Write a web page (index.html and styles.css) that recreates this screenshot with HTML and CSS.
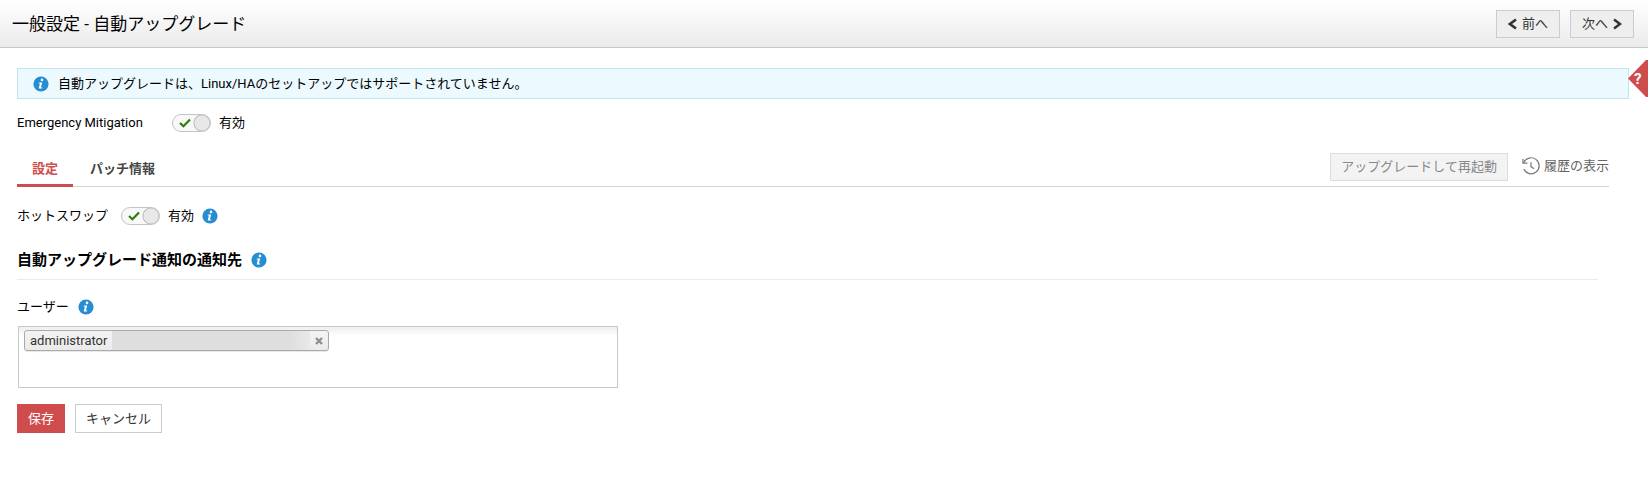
FILE: index.html
```html
<!DOCTYPE html>
<html lang="ja">
  <head>
    <meta charset="UTF-8" />
    <meta name="viewport" content="width=device-width, initial-scale=1.0" />
    <title>一般設定 - 自動アップグレード</title>
    <link rel="stylesheet" href="styles.css">
  </head>

  <body>
    <svg class="defs" aria-hidden="true">
      <symbol id="info" viewBox="0 0 16 16">
        <circle cx="8" cy="8" r="7.6" fill="#268dd2" />
        <circle cx="9" cy="3.9" r="1.3" fill="#fff" />
        <path d="M5.9 6.5h3.3L7.9 11.4h1.4l-.3 1.1H5.7L6.9 7.6H5.6z" fill="#fff" />
      </symbol>
      <symbol id="check" viewBox="0 0 12 10">
        <path d="M1 5l3.4 3.3L11 1.4" fill="none" stroke="#2f7d0b" stroke-width="2.2" />
      </symbol>
    </svg>

    <header class="header">
      <h1>一般設定 - 自動アップグレード</h1>
      <div class="pager">
        <button type="button" class="btn">
          <svg width="9" height="12" viewBox="0 0 9 12"><path d="M8 1.5L2 6l6 4.5" fill="none" stroke="#333" stroke-width="2.6" /></svg>
          前へ
        </button>
        <button type="button" class="btn">
          次へ
          <svg width="9" height="12" viewBox="0 0 9 12"><path d="M1 1.5L7 6l-6 4.5" fill="none" stroke="#333" stroke-width="2.6" /></svg>
        </button>
      </div>
    </header>

    <a href="#" class="help" aria-label="ヘルプ"><span>?</span></a>

    <main class="container">
      <div class="notice">
        <svg class="info"><use href="#info" /></svg>
        <p>自動アップグレードは、Linux/HAのセットアップではサポートされていません。</p>
      </div>

      <div class="row mitigation">
        <label for="mitigation" class="row-label">Emergency Mitigation</label>
        <span class="toggle">
          <input type="checkbox" id="mitigation" checked />
          <svg><use href="#check" /></svg>
        </span>
        <span>有効</span>
      </div>

      <div class="tabbar">
        <nav class="tabs">
          <a href="#settings" class="active">設定</a>
          <a href="#patch">パッチ情報</a>
        </nav>
        <div class="actions">
          <button type="button" class="btn" disabled>アップグレードして再起動</button>
          <a href="#history" class="history">
            <svg width="18" height="18" viewBox="0 0 18 18" fill="none" stroke="#757a7c" stroke-width="1.2">
              <path d="M1.7 5.8A8 8 0 1 1 1.8 12" />
              <path d="M1 1.8v4.4h4.4" />
              <path d="M9 5.2v4.4l3 2.2" />
            </svg>
            履歴の表示
          </a>
        </div>
      </div>

      <div class="row hotswap">
        <label for="hotswap">ホットスワップ</label>
        <span class="toggle">
          <input type="checkbox" id="hotswap" checked />
          <svg><use href="#check" /></svg>
        </span>
        <span>有効</span>
        <svg class="info"><use href="#info" /></svg>
      </div>

      <form class="form">
        <h2>自動アップグレード通知の通知先 <svg class="info"><use href="#info" /></svg></h2>

        <div class="field-label">
          <label for="users">ユーザー</label>
          <svg class="info"><use href="#info" /></svg>
        </div>
        <div class="userbox">
          <span class="chip">
            administrator
            <span class="masked"></span>
            <button type="button" aria-label="削除">
              <svg width="8" height="8" viewBox="0 0 8 8"><path d="M1 1l6 6M7 1L1 7" stroke="#8f8f8f" stroke-width="2.4" /></svg>
            </button>
          </span>
          <input type="text" id="users" />
        </div>

        <div class="buttons">
          <button type="submit" class="btn save">保存</button>
          <button type="button" class="btn cancel">キャンセル</button>
        </div>
      </form>
    </main>
  </body>
</html>
```

FILE: styles.css
```css
* {
  box-sizing: border-box;
}

body {
  margin: 0;
  background: #fff;
  color: #000;
  font-family: Roboto, "Noto Sans CJK JP", sans-serif;
  font-size: 13px;
  line-height: 20px;
}

h1,
h2,
p {
  margin: 0;
}

a {
  text-decoration: none;
}

svg {
  flex: none;
}

button,
input {
  font: inherit;
}

.defs {
  position: absolute;
  width: 0;
  height: 0;
}

.info {
  width: 16px;
  height: 16px;
}

.btn {
  display: flex;
  align-items: center;
  justify-content: center;
  gap: 5px;
  height: 28px;
  padding: 0 10px;
  border: 1px solid #ccc;
  background: #eee;
  color: #333;
  cursor: pointer;
}

.header {
  display: flex;
  align-items: center;
  justify-content: space-between;
  height: 48px;
  padding: 0 14px 0 12px;
  border-bottom: 1px solid #c8c8c8;
  background: linear-gradient(#fff, #ebebeb);
}

.header h1 {
  font-size: 17px;
  font-weight: normal;
}

.pager {
  display: flex;
  gap: 10px;
}

.pager .btn {
  width: 64px;
}

.help {
  position: absolute;
  top: 60px;
  right: 0;
  display: flex;
  align-items: center;
  width: 20px;
  height: 37px;
  padding-left: 6px;
  background: #cf4c4c;
  clip-path: polygon(0 50%, 90% 0, 100% 0, 100% 100%, 90% 100%);
  color: #fff;
  font-size: 15px;
  font-weight: bold;
}

.container {
  padding: 20px 19px 20px 17px;
}

.notice {
  display: flex;
  align-items: center;
  gap: 9px;
  height: 31px;
  padding: 0 15px;
  border: 1px solid #bfe6f0;
  background: #ecfaff;
}

.row {
  display: flex;
  align-items: center;
  gap: 8px;
}

.mitigation {
  margin-top: 14px;
}

.row-label {
  width: 147px;
}

.toggle {
  display: grid;
  align-items: center;
  width: 39px;
  height: 18px;
}

.toggle input {
  grid-area: 1 / 1;
  width: 39px;
  height: 18px;
  margin: 0;
  border: 1px solid #c4c4c4;
  border-radius: 9px;
  appearance: none;
  background: radial-gradient(circle at 29px 8px, #e8e8e8 7px, #bbb 8px, #f8f8f8 9px);
  cursor: pointer;
}

.toggle svg {
  grid-area: 1 / 1;
  width: 12px;
  height: 10px;
  margin-left: 7px;
  pointer-events: none;
}

.tabbar {
  display: flex;
  align-items: flex-end;
  justify-content: space-between;
  margin: 20px 20px 0 0;
  border-bottom: 1px solid #d5d5d5;
}

.tabs {
  display: flex;
  gap: 2px;
  margin-bottom: -1px;
}

.tabs a {
  padding: 6px 15px 5px;
  border-bottom: 3px solid transparent;
  color: #444;
  font-weight: bold;
}

.tabs .active {
  border-color: #cf4c4c;
  color: #cf4c4c;
}

.actions {
  display: flex;
  gap: 14px;
  margin-bottom: 5px;
}

.actions .btn {
  border-color: #ddd;
  background: #f3f3f3;
  color: #888;
  cursor: default;
}

.history {
  display: flex;
  align-items: center;
  gap: 4px;
  height: 25px;
  color: #666;
}

.hotswap {
  margin-top: 19px;
}

.hotswap label {
  margin-right: 5px;
}

.form h2 {
  display: flex;
  align-items: center;
  gap: 9px;
  margin: 24px 31px 0 0;
  padding-bottom: 9px;
  border-bottom: 1px solid #eaeaea;
  font-size: 15px;
}

.field-label {
  display: flex;
  align-items: center;
  gap: 9px;
  margin-top: 17px;
}

.userbox {
  display: flex;
  align-items: flex-start;
  max-width: 600px;
  height: 62px;
  margin: 9px 0 0 1px;
  padding: 3px 5px;
  border: 1px solid #c8c8c8;
  background: linear-gradient(#eee, #fff 9px);
}

.userbox input {
  flex: 1;
  min-width: 0;
  height: 20px;
  border: 0;
  outline: 0;
  background: transparent;
}

.chip {
  display: flex;
  align-items: center;
  gap: 5px;
  height: 21px;
  padding: 0 5px;
  border: 1px solid #aaa;
  border-radius: 3px;
  background: linear-gradient(#f4f4f4, #eaeaea);
  box-shadow: 0 1px 1px rgba(0, 0, 0, 0.1);
  color: #333;
}

.masked {
  width: 198px;
  height: 19px;
  background: linear-gradient(90deg, #dedede 90%, #e9e9e9);
}

.chip button {
  display: flex;
  padding: 0;
  border: 0;
  background: none;
  cursor: pointer;
}

.buttons {
  display: flex;
  gap: 10px;
  margin-top: 16px;
}

.buttons .btn {
  height: 29px;
}

.buttons .save {
  border-color: #cf4c4c;
  background: #cf4c4c;
  color: #fff;
}

.buttons .cancel {
  background: #fff;
}
```
